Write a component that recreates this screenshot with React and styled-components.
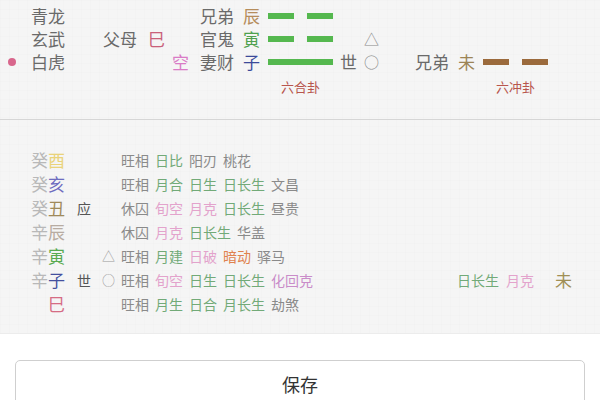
import React from "react";
import styled, { createGlobalStyle } from "styled-components";

const GlobalStyle = createGlobalStyle`
  html, body {
    margin: 0;
    padding: 0;
    background: #f5f5f5;
    font-family: "Noto Sans CJK SC", "Noto Sans", sans-serif;
  }
`;

// colours
const C = {
  label: "#6a6a6a",
  green: "#55b84f",
  brown: "#9b6a3c",
  red: "#c9617a",
  kong: "#d97bc6",
  chen: "#b68d5c",
  yin: "#4fa14f",
  zi: "#3b4a9a",
  wei: "#9c8456",
  name: "#b8564e",
};

const mainYao = [
  { god: "青龙", rel: "兄弟", br: "辰", brColor: C.chen, yin: true },
  { god: "玄武", fu: "父母", fuBr: "巳", rel: "官鬼", br: "寅", brColor: C.yin, yin: true, mark: "△" },
  {
    god: "白虎",
    dot: true,
    kong: "空",
    rel: "妻财",
    br: "子",
    brColor: C.zi,
    shi: "世",
    mark: "○",
    change: { rel: "兄弟", br: "未", brColor: C.wei, yin: true },
  },
];

const g = "#72aa78";
const p = "#e3a3cc";
const o = "#e0824e";
const v = "#c98cc9";

const detail = [
  { stem: "癸", br: "酉", brColor: "#ead37a", attrs: [["旺相"], ["日比", g], ["阳刃"], ["桃花"]] },
  { stem: "癸", br: "亥", brColor: "#6d6cbf", attrs: [["旺相"], ["月合", g], ["日生", g], ["日长生", g], ["文昌"]] },
  { stem: "癸", br: "丑", brColor: "#a08a5a", tag: "应", attrs: [["休囚"], ["旬空", p], ["月克", p], ["日长生", g], ["昼贵"]] },
  { stem: "辛", br: "辰", brColor: "#b8aca2", attrs: [["休囚"], ["月克", p], ["日长生", g], ["华盖"]] },
  { stem: "辛", br: "寅", brColor: "#58aa50", mark: "△", attrs: [["旺相"], ["月建", g], ["日破", p], ["暗动", o], ["驿马"]] },
  {
    stem: "辛",
    br: "子",
    brColor: "#44509e",
    tag: "世",
    mark: "○",
    attrs: [["旺相"], ["旬空", p], ["日生", g], ["日长生", g], ["化回克", v]],
    right: { attrs: [["日长生", g], ["月克", p]], br: "未", brColor: "#a08f55" },
  },
  { stem: "", br: "巳", brColor: "#d56c84", attrs: [["旺相"], ["月生", g], ["日合", g], ["月长生", g], ["劫煞"]] },
];

function Yao({ yin, color }) {
  return yin ? (
    <YaoLine>
      <Seg $color={color} />
      <Seg $color={color} />
    </YaoLine>
  ) : (
    <YaoLine>
      <Seg $color={color} $full />
    </YaoLine>
  );
}

export default function App() {
  return (
    <Page>
      <GlobalStyle />
      <Top>
        {mainYao.map((y, i) => (
          <YaoRow key={i}>
            <Cell>{y.dot && <Dot />}</Cell>
            <Cell>{y.god}</Cell>
            <Cell>{y.fu}</Cell>
            <Cell $color={C.red}>{y.fuBr}</Cell>
            <Cell $color={C.kong}>{y.kong}</Cell>
            <Cell>{y.rel}</Cell>
            <Cell $color={y.brColor}>{y.br}</Cell>
            <Cell>
              <Yao yin={y.yin} color={C.green} />
            </Cell>
            <Cell>{y.shi}</Cell>
            <Mark>{y.mark}</Mark>
            <Cell>{y.change && y.change.rel}</Cell>
            <Cell $color={y.change && y.change.brColor}>{y.change && y.change.br}</Cell>
            <Cell>{y.change && <Yao yin color={C.brown} />}</Cell>
          </YaoRow>
        ))}
        <YaoRow>
          <NameCell $col={8}>六合卦</NameCell>
          <NameCell $col={13}>六冲卦</NameCell>
        </YaoRow>
      </Top>

      <Detail>
        {detail.map((d, i) => (
          <DetailRow key={i}>
            <GanZhi>
              <Stem>{d.stem}</Stem>
              <Branch $color={d.brColor}>{d.br}</Branch>
            </GanZhi>
            <Tag>{d.tag}</Tag>
            <SmallMark>{d.mark}</SmallMark>
            <Attrs>
              {d.attrs.map(([t, c], j) => (
                <Attr key={j} $color={c}>
                  {t}
                </Attr>
              ))}
            </Attrs>
            <RightGroup>
              {d.right && (
                <>
                  {d.right.attrs.map(([t, c], j) => (
                    <Attr key={j} $color={c}>
                      {t}
                    </Attr>
                  ))}
                  <Branch $color={d.right.brColor} $gap>
                    {d.right.br}
                  </Branch>
                </>
              )}
            </RightGroup>
          </DetailRow>
        ))}
      </Detail>

      <Footer>
        <SaveButton>保存</SaveButton>
      </Footer>
    </Page>
  );
}

const Page = styled.div`
  width: 600px;
  height: 400px;
  overflow: hidden;
  background-color: #f5f5f5;
  background-image: linear-gradient(rgba(0, 0, 0, 0.008) 1px, transparent 1px),
    linear-gradient(90deg, rgba(0, 0, 0, 0.008) 1px, transparent 1px);
  background-size: 9px 9px;
`;

const Top = styled.div`
  height: 120px;
  box-sizing: border-box;
  padding-top: 4px;
  border-bottom: 1px solid #d6d6d6;
`;

const YaoRow = styled.div`
  display: grid;
  grid-template-columns: 31px 72px 45px 24px 28px 43px 25px 72px 24px 51px 43px 25px 66px;
  height: 23px;
  align-items: center;
  font-size: 17px;
  line-height: 23px;
  color: ${C.label};
`;

const Cell = styled.div`
  display: flex;
  align-items: center;
  height: 23px;
  color: ${(p) => p.$color || "inherit"};
`;

const Mark = styled(Cell)`
  font-size: 15px;
  color: #8a8a8a;
`;

const Dot = styled.span`
  width: 8px;
  height: 8px;
  margin-left: 8px;
  border-radius: 50%;
  background: #d8668c;
`;

const YaoLine = styled.div`
  display: flex;
  justify-content: space-between;
  width: 65px;
`;

const Seg = styled.span`
  display: block;
  height: 6px;
  width: ${(p) => (p.$full ? "65px" : "26px")};
  background: ${(p) => p.$color};
`;

const NameCell = styled.div`
  grid-column: ${(p) => p.$col};
  grid-row: 1;
  width: 65px;
  margin-top: 2px;
  text-align: center;
  font-size: 13px;
  color: ${C.name};
`;

const Detail = styled.div`
  height: 213px;
  box-sizing: border-box;
  padding: 27px 28px 0 31px;
`;

const DetailRow = styled.div`
  display: grid;
  grid-template-columns: 46px 25px 19px 1fr auto;
  align-items: center;
  height: 24px;
`;

const GanZhi = styled.div`
  display: flex;
  font-size: 17px;
`;

const Stem = styled.span`
  width: 17px;
  color: #b8b8b8;
`;

const Branch = styled.span`
  font-size: 17px;
  color: ${(p) => p.$color};
  margin-left: ${(p) => (p.$gap ? "14px" : "0")};
`;

const Tag = styled.span`
  font-size: 14px;
  color: #555;
`;

const SmallMark = styled.span`
  font-size: 13px;
  color: #9a9a9a;
`;

const Attrs = styled.div`
  display: flex;
  gap: 6px;
  font-size: 14px;
`;

const Attr = styled.span`
  color: ${(p) => p.$color || "#8a8a8a"};
`;

const RightGroup = styled.div`
  display: flex;
  align-items: center;
  gap: 7px;
  font-size: 14px;
`;

const Footer = styled.div`
  height: 67px;
  box-sizing: border-box;
  padding: 26px 15px 0;
  background: #ffffff;
  border-top: 1px solid #ececec;
`;

const SaveButton = styled.button`
  display: block;
  width: 100%;
  height: 52px;
  border: 1px solid #cfcfcf;
  border-radius: 5px;
  background: #ffffff;
  font-family: "Noto Sans CJK SC", "Noto Sans", sans-serif;
  font-size: 18px;
  color: #333;
  padding: 0 0 4px;
`;
